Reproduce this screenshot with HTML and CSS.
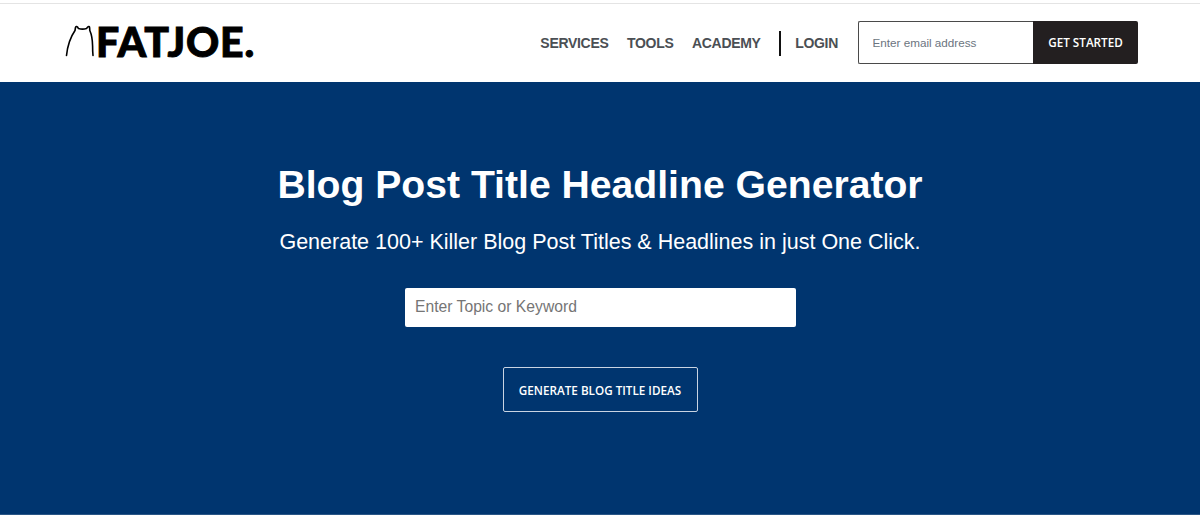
FILE: index.html
```html
<!DOCTYPE html>
<html lang="en">
<head>
<meta charset="utf-8">
<title>Blog Post Title Headline Generator</title>
<link rel="stylesheet" href="styles.css">
</head>
<body>
<header class="header">
  <a class="logo" href="#">
    <svg class="bear" width="30" height="32" viewBox="0 0 30 32" aria-hidden="true">
      <path d="M1.5 30.5C2.5 21 5.5 12 10 5.5L10.5 2.5C10.8 1.4 11.8 1.2 12.5 2L13.5 3.6C16 4.3 19 4.3 21.5 3.6L22.8 2C23.5 1.2 24.5 1.5 24.6 2.6L24.8 5.5C26.6 9.5 27.5 14 27.6 21C27.6 25 27.7 28 28 30.5" fill="none" stroke="#000" stroke-width="1.6" stroke-linecap="round" stroke-linejoin="round"/>
    </svg>
    <span class="logo-text">FATJOE.</span>
  </a>
  <nav class="nav">
    <a href="#">SERVICES</a>
    <a href="#">TOOLS</a>
    <a href="#">ACADEMY</a>
    <span class="divider"></span>
    <a href="#">LOGIN</a>
  </nav>
  <form class="signup">
    <input class="signup-input" type="text" placeholder="Enter email address">
    <button class="signup-btn" type="button">GET STARTED</button>
  </form>
</header>
<main class="hero">
  <h1>Blog Post Title Headline Generator</h1>
  <p>Generate 100+ Killer Blog Post Titles &amp; Headlines in just One Click.</p>
  <input class="topic" type="text" placeholder="Enter Topic or Keyword">
  <button class="generate" type="button">GENERATE BLOG TITLE IDEAS</button>
</main>
</body>
</html>
```
FILE: styles.css
```css
* { box-sizing: border-box; }
html, body { margin: 0; height: 100%; background: #fff; overflow: hidden; }
body { padding-top: 3px; font-family: "Liberation Sans", Arial, sans-serif; }
.header {
  height: 79px;
  border-top: 1px solid #e4e4e4;
  display: flex;
  align-items: center;
  padding: 0 62px 0 65px;
}
.logo { display: flex; align-items: center; gap: 1px; text-decoration: none; color: #000; margin-bottom: 4px; }
.bear { display: block; }
.logo-text { font-family: Lato, sans-serif; font-weight: 900; font-size: 41px; line-height: 1; letter-spacing: .85px; -webkit-text-stroke: .9px #000; }
.nav { margin-left: auto; display: flex; align-items: center; }
.nav a { color: #4b4f54; font-weight: 700; font-size: 14px; letter-spacing: -.3px; text-decoration: none; margin-right: 18.5px; }
.divider { width: 2px; height: 25px; background: #111; margin: 0 14px 0 0; }
.signup { display: flex; margin-left: 1.5px; margin-bottom: 2px; height: 43px; }
.signup-input {
  width: 175px;
  border: 1px solid #4a4a4a;
  border-right: 0;
  border-radius: 2px 0 0 2px;
  padding: 0 13.5px;
  font: 11.7px "Liberation Sans", Arial, sans-serif;
  background: #fff;
  outline: 0;
}
.signup-input::placeholder { color: #6b7480; opacity: 1; }
.signup-btn {
  width: 105px;
  border: 0;
  border-radius: 0 2px 2px 0;
  background: #231f20;
  color: #fff;
  font: 600 11.7px "Open Sans", sans-serif;
}
.hero {
  height: 433px;
  background: #00356f;
  border-bottom: 1px solid #2a5686;
  display: flex;
  flex-direction: column;
  align-items: center;
  color: #fff;
}
.hero h1 { margin: 79px 0 0; font-size: 39.15px; line-height: 48px; font-weight: 700; }
.hero p { margin: 19px 0 0; font-size: 21.5px; line-height: 28px; }
.topic {
  margin-top: 32px;
  width: 391px;
  height: 39px;
  border: 0;
  border-radius: 2px;
  padding: 0 10.5px 2px;
  font: 15.7px "Liberation Sans", Arial, sans-serif;
  background: #fff;
  outline: 0;
}
.topic::placeholder { color: #757575; opacity: 1; }
.generate {
  margin-top: 40px;
  width: 195px;
  height: 45px;
  border: 1px solid #c9d4e2;
  border-radius: 2px;
  background: transparent;
  color: #fff;
  font: 600 11.7px "Open Sans", sans-serif;
}
```
